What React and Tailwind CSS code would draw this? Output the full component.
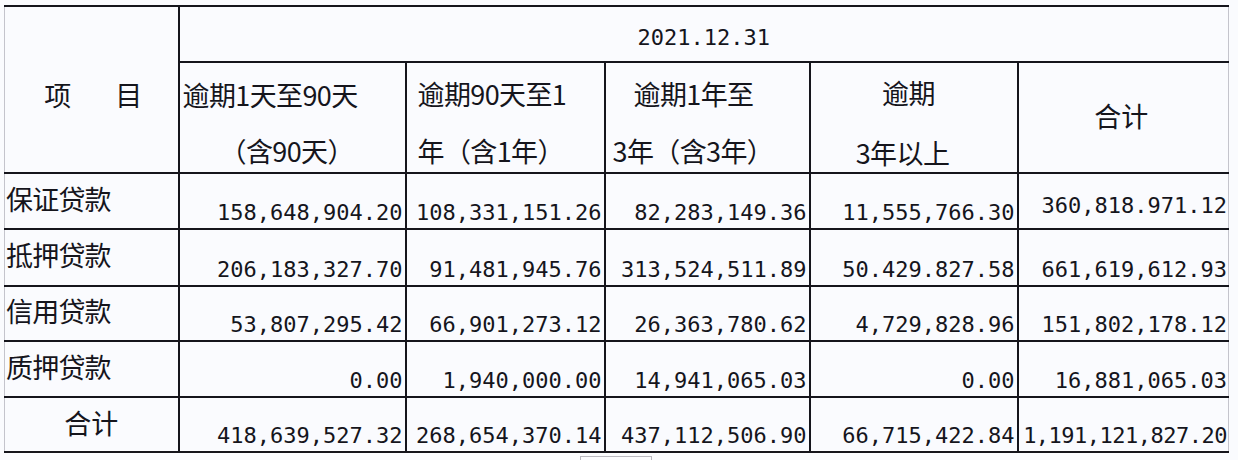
import React from "react";

const rows = [
  ["保证贷款", ["158,648,904.20", "108,331,151.26", "82,283,149.36", "11,555,766.30", "360,818.971.12"], "h-[56px]"],
  ["抵押贷款", ["206,183,327.70", "91,481,945.76", "313,524,511.89", "50.429.827.58", "661,619,612.93"], "h-[57px]"],
  ["信用贷款", ["53,807,295.42", "66,901,273.12", "26,363,780.62", "4,729,828.96", "151,802,178.12"], "h-[55px]"],
  ["质押贷款", ["0.00", "1,940,000.00", "14,941,065.03", "0.00", "16,881,065.03"], "h-[56px]"],
  ["合计", ["418,639,527.32", "268,654,370.14", "437,112,506.90", "66,715,422.84", "1,191,121,827.20"], "h-[55px]"],
];

const cjk = "font-['Noto_Sans_CJK_SC',sans-serif]";
const mono = "font-['DejaVu_Sans_Mono','Liberation_Mono',monospace]";

export default function App() {
  return (
    <div className="w-[1238px] h-[460px] bg-[#fafbfe] text-[#15151c] pt-[5px] pl-[4px] overflow-hidden">
      <table className="table-fixed border-collapse w-[1224px]">
        <colgroup>
          <col className="w-[174px]" />
          <col className="w-[227px]" />
          <col className="w-[199px]" />
          <col className="w-[205px]" />
          <col className="w-[208px]" />
          <col className="w-[211px]" />
        </colgroup>
        <tbody>
          <tr className="h-[56px]">
            <td
              rowSpan={2}
              className={`border-t-2 border-b-2 border-r-2 border-t-[#15151c] border-b-[#15151c] border-r-[#15151c] border-l border-l-dashed border-l-[#c4c4cc] align-middle ${cjk} text-[27px] pt-[12px]`}
            >
              <div className="flex justify-center gap-[44px] pl-[4px]">
                <span>项</span>
                <span>目</span>
              </div>
            </td>
            <td
              colSpan={5}
              className={`border-t-2 border-b-2 border-[#15151c] border-r border-r-dashed border-r-[#c4c4cc] text-center align-middle ${mono} text-[22px] pt-[7px]`}
            >
              2021.12.31
            </td>
          </tr>
          <tr className="h-[111px]">
            <td className={`border-2 border-[#15151c] align-top ${cjk} text-[27px] whitespace-nowrap`}>
              <div className="mt-[17px] leading-[30px] pl-[3px] tracking-[-0.6px]">逾期1天至90天</div>
              <div className="mt-[26px] leading-[30px] pl-[40px] tracking-[-0.6px]">（含90天）</div>
            </td>
            <td className={`border-2 border-[#15151c] align-top ${cjk} text-[27px] whitespace-nowrap`}>
              <div className="mt-[16px] leading-[30px] pl-[11px] tracking-[-0.6px]">逾期90天至1</div>
              <div className="mt-[27px] leading-[30px] pl-[11px] tracking-[-0.6px]">年（含1年）</div>
            </td>
            <td className={`border-2 border-[#15151c] align-top ${cjk} text-[27px] whitespace-nowrap`}>
              <div className="mt-[16px] leading-[30px] pl-[28px] tracking-[-0.6px]">逾期1年至</div>
              <div className="mt-[27px] leading-[30px] pl-[7px] tracking-[-0.6px]">3年（含3年）</div>
            </td>
            <td className={`border-2 border-[#15151c] align-top ${cjk} text-[27px] whitespace-nowrap text-center`}>
              <div className="mt-[15px] leading-[30px] pr-[10px] tracking-[-0.6px]">逾期</div>
              <div className="mt-[30px] leading-[30px] pr-[22px] tracking-[-0.6px]">3年以上</div>
            </td>
            <td
              className={`border-t-2 border-b-2 border-l-2 border-[#15151c] border-r border-r-dashed border-r-[#c4c4cc] align-middle text-center ${cjk} text-[27px] pr-[4px] pb-[2px]`}
            >
              合计
            </td>
          </tr>
          {rows.map(([label, vals, h], ri) => (
            <tr key={label + ri} className={h}>
              <td
                className={`border-t-2 border-b-2 border-r-2 border-t-[#15151c] border-b-[#15151c] border-r-[#15151c] border-l border-l-dashed border-l-[#c4c4cc] align-middle ${cjk} text-[27px] whitespace-nowrap ${
                  label === "合计" ? "text-center pb-[2px]" : "text-left pl-[1px] pb-[4px] tracking-[-0.8px]"
                }`}
              >
                {label}
              </td>
              {vals.map((v, ci) => {
                const last = ci === 4;
                const raised = ri === 0 && last;
                const tight = v.length >= 16;
                return (
                  <td
                    key={ci}
                    className={`${
                      last
                        ? "border-t-2 border-b-2 border-l-2 border-[#15151c] border-r border-r-dashed border-r-[#c4c4cc]"
                        : "border-2 border-[#15151c]"
                    } align-bottom text-right whitespace-nowrap ${mono} text-[22px] leading-[26px] ${
                      raised ? "pb-[9px]" : "pb-[2px]"
                    } ${last ? "pr-[1px]" : "pr-[2px]"} ${tight ? "tracking-[-0.5px]" : ""}`}
                  >
                    {v}
                  </td>
                );
              })}
            </tr>
          ))}
        </tbody>
      </table>
      <div className="ml-[576px] mt-[3px] w-[72px] h-[6px] border-l border-r border-t border-[#b8b8c0]" />
    </div>
  );
}
